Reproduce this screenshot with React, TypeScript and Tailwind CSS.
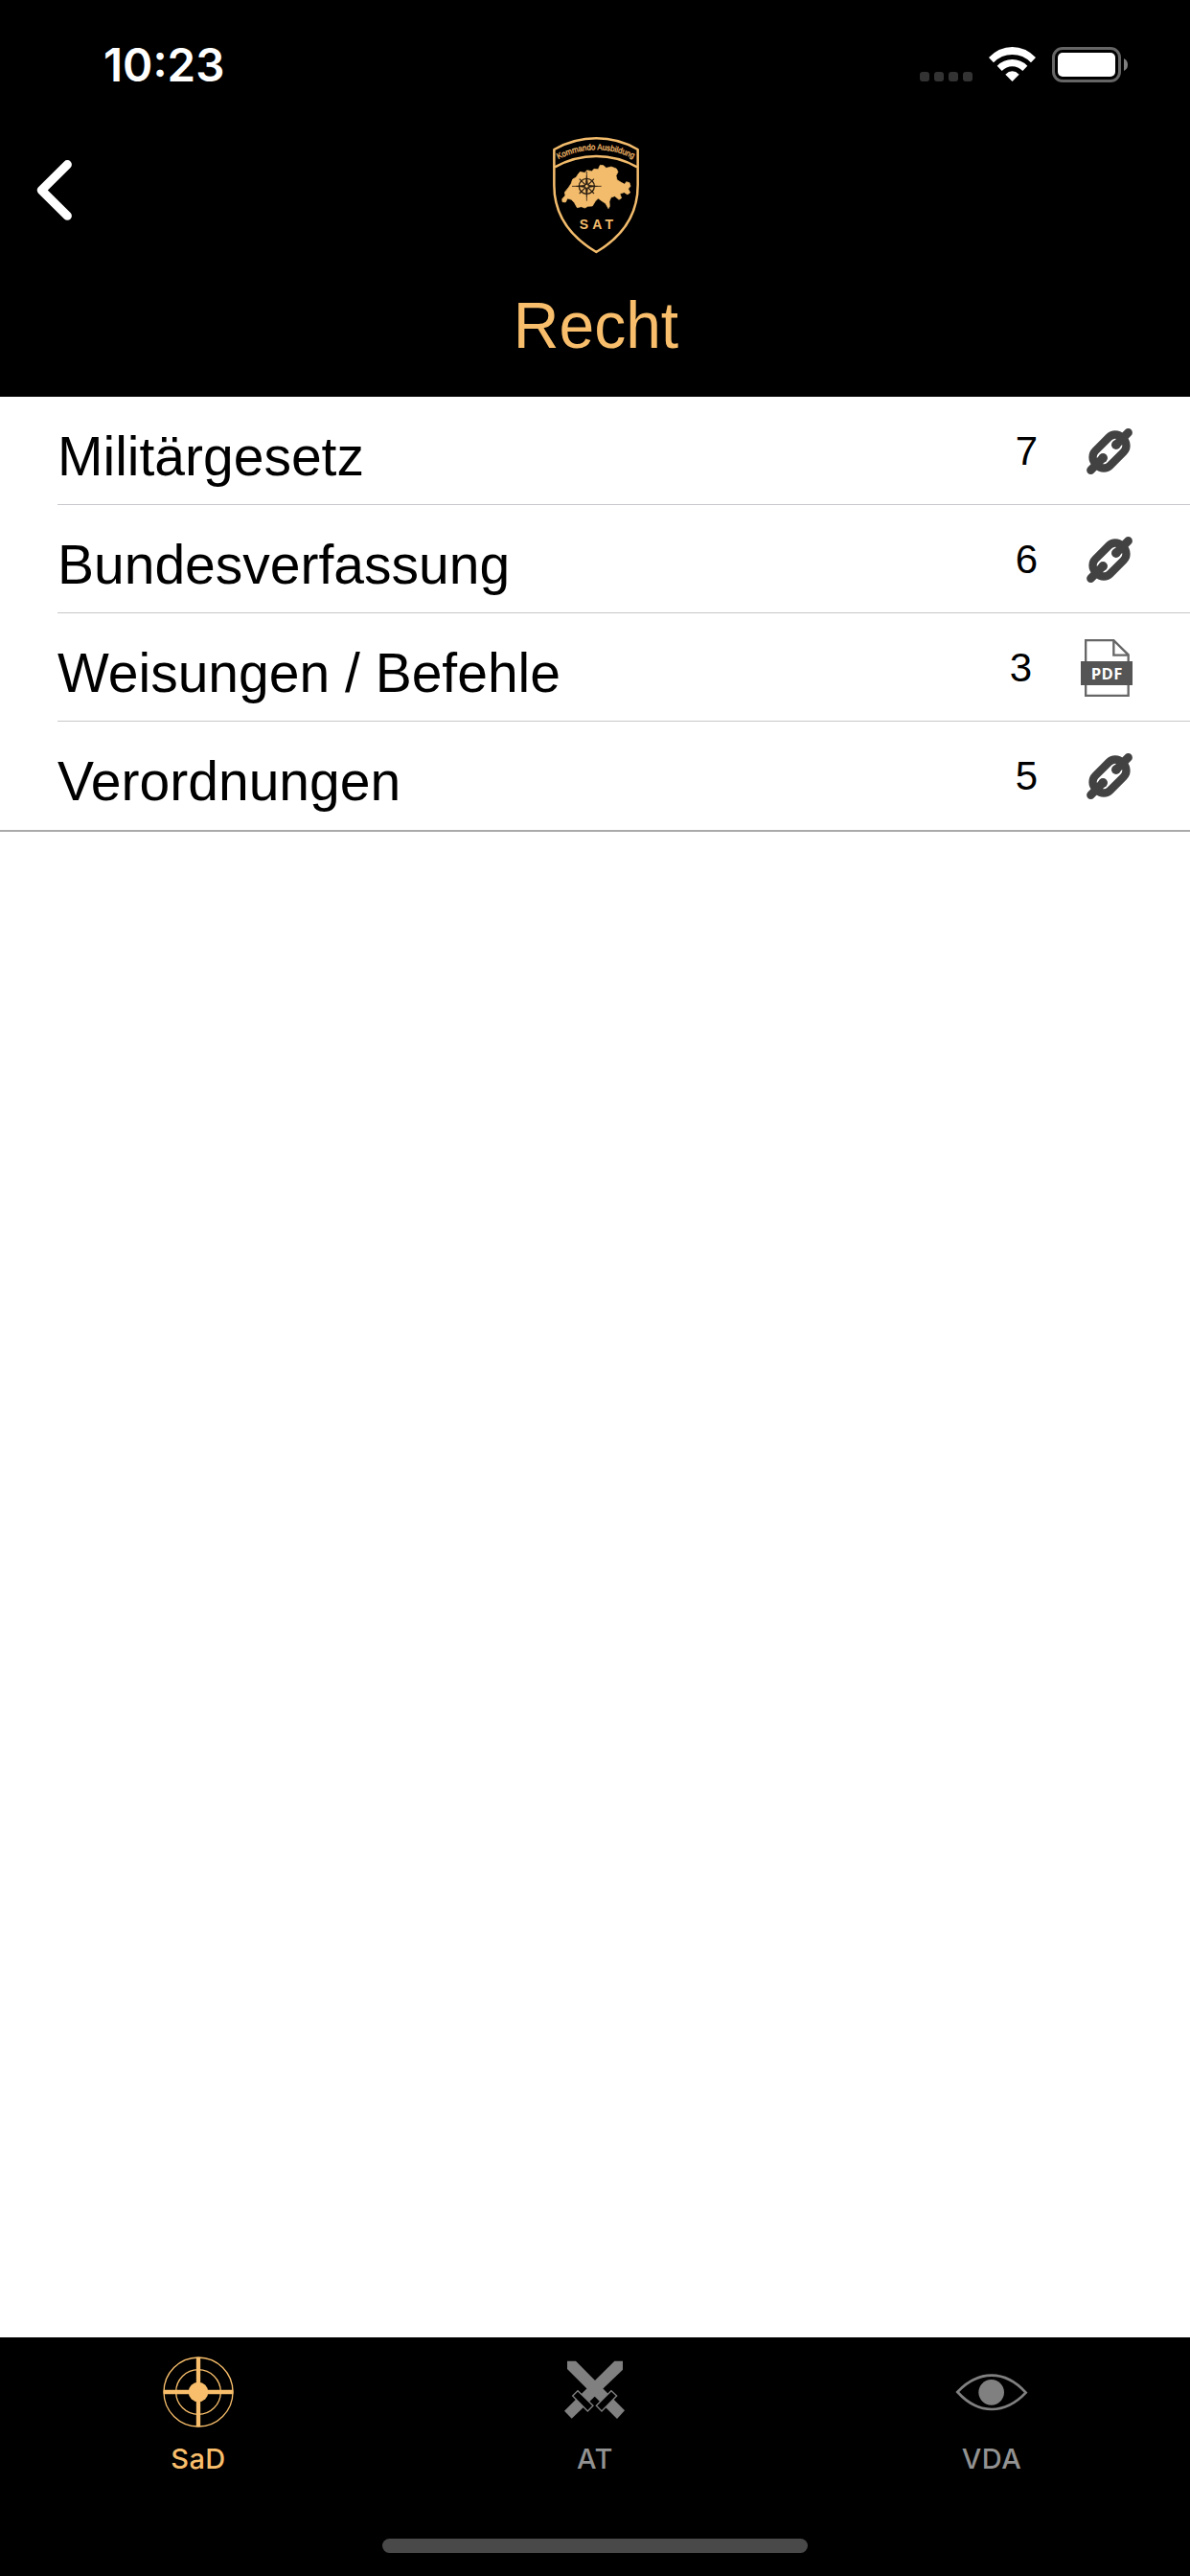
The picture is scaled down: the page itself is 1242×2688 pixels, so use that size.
import type { ReactNode } from "react";

type RowIcon = "link" | "pdf";

const rows: { title: string; count: number; icon: RowIcon }[] = [
  { title: "Militärgesetz", count: 7, icon: "link" },
  { title: "Bundesverfassung", count: 6, icon: "link" },
  { title: "Weisungen / Befehle", count: 3, icon: "pdf" },
  { title: "Verordnungen", count: 5, icon: "link" },
];

function LinkIcon() {
  return (
    <svg className="w-12 h-12" viewBox="-72 -72 144 144" fill="none" stroke="#424242">
      <g transform="rotate(-45)">
        <rect x="-58" y="-32.500" width="116" height="65" rx="28" strokeWidth="25" />
        <path d="M-83 0H-32M83 0H32" strokeWidth="26" strokeLinecap="round" />
        <circle cx="-29" cy="0" r="14.500" fill="#424242" stroke="none" />
        <circle cx="29" cy="0" r="14.500" fill="#424242" stroke="none" />
      </g>
    </svg>
  );
}

function PdfIcon() {
  return (
    <svg className="w-[54px] h-[60px]" viewBox="0 0 162 180">
      <path
        d="M15.500 3.500H103L149 49V176.500H15.500ZM103 3.500V50H149"
        fill="none"
        stroke="#666"
        strokeWidth="7"
      />
      <rect y="69" width="162" height="75" fill="#555" />
      <text
        x="32"
        y="125"
        fill="#fff"
        fontSize="50"
        fontWeight="700"
        textLength="98"
        className="font-['Open_Sans',sans-serif]"
      >
        PDF
      </text>
    </svg>
  );
}

function Logo() {
  return (
    <svg className="w-[120px] h-[145px]" viewBox="0 0 360 435" fill="none">
      <path
        d="M52 78Q114 43 184 43Q254 43 314 78V190C314 285 262 353 184 399C106 353 52 285 52 190Z"
        stroke="#f3bc6c"
        strokeWidth="7.500"
        strokeLinejoin="round"
      />
      <path d="M54 133Q116 99 184 99Q252 99 312 133" stroke="#f3bc6c" strokeWidth="8" />
      <path id="motto" d="M65 109Q122 79 184 79Q246 79 305 109" />
      <text
        fill="#f3bc6c"
        fontSize="26"
        className="font-['Liberation_Sans',Arial,sans-serif]"
        stroke="#f3bc6c"
        strokeWidth="0.9"
      >
        <textPath href="#motto" textLength="244" lengthAdjust="spacingAndGlyphs">
          Kommando Ausbildung
        </textPath>
      </text>
      <path
        d="M126 157L133 148L148 151L155 143L170 146L177 139L190 140L196 127L207 128L215 136L231 132L247 138L252 148L246 160L249 173L262 181L273 187L278 179L288 182L291 193L284 201L290 213L282 219L271 212L258 217L263 230L255 235L242 224L230 228L225 241L226 256L222 263L213 247L201 239L190 231L181 240L172 255L158 256L148 261L137 257L124 260L115 244L106 235L94 231L88 243L78 242L77 233L87 222L85 212L97 197L105 185L110 171L121 165Z"
        fill="#f3bc6c"
        stroke="#f3bc6c"
        strokeWidth="2"
        strokeLinejoin="round"
      />
      <g transform="translate(154 193)" stroke="#2a1e12">
        <circle r="24" strokeWidth="4" />
        <path d="M-46 0H46M0-46V46" strokeWidth="2.500" />
        <path d="M-23-23L23 23M-23 23L23-23" strokeWidth="3.500" />
        <path d="M0-34L4-6L0 0L-4-6ZM0 34L4 6L0 0L-4 6ZM-34 0L-6 4L0 0L-6-4ZM34 0L6 4L0 0L6-4Z" fill="#2a1e12" />
        <circle r="6" fill="#f3bc6c" strokeWidth="3" />
      </g>
      <text
        x="131"
        y="327"
        fill="#f3bc6c"
        fontSize="42"
        fontWeight="700"
        textLength="106"
        className="font-['Liberation_Sans',Arial,sans-serif]"
      >
        SAT
      </text>
    </svg>
  );
}

function StatusIcons() {
  return (
    <div className="flex items-end">
      <div className="flex gap-[5px] pb-px">
        <span className="size-2.5 rounded-[3px] bg-[#333]" />
        <span className="size-2.5 rounded-[3px] bg-[#333]" />
        <span className="size-2.5 rounded-[3px] bg-[#333]" />
        <span className="size-2.5 rounded-[3px] bg-[#333]" />
      </div>
      {/* Wifi */}
      <svg className="w-[49px] h-9 ml-[17px] mb-px" viewBox="0 0 147 108" fill="#fff">
        <path d="M0 33Q32 0 73.500 0Q115 0 147 33L132 49Q108 24 73.500 24Q39 24 15 49Z" />
        <path d="M26 59Q46 39 73.500 39Q101 39 121 59L106 75Q92 61 73.500 61Q55 61 41 75Z" />
        <path d="M52 86Q62 76 73.500 76Q85 76 95 86L73.500 108Z" />
      </svg>
      {/* Battery */}
      <div className="flex items-center ml-[17px]">
        <div className="w-[72px] h-[37px] rounded-[11px] border-[3px] border-[#666] p-[3px]">
          <div className="h-full rounded-[5px] bg-white" />
        </div>
        <svg className="w-1 h-[13px] ml-[3px]" viewBox="0 0 4 13">
          <path d="M0 0Q4 2 4 6.500T0 13Z" fill="#808080" />
        </svg>
      </div>
    </div>
  );
}

function Header() {
  return (
    <header className="h-[414px] bg-black text-white">
      <div className="flex justify-between pl-[108px] pr-[65px] pt-[49px] h-[143px]">
        <span className="font-['Inter',sans-serif] text-[47.5px] leading-[38px] font-semibold">10:23</span>
        <div>
          <StatusIcons />
        </div>
      </div>
      <div className="grid grid-cols-3 h-[132px]">
        <svg
          className="w-[50px] h-[70px] ml-[30px] mt-5"
          viewBox="30 163 50 70"
          fill="none"
          stroke="#fff"
          strokeWidth="9.200"
          strokeLinecap="round"
          strokeLinejoin="round"
        >
          <path d="M70.300 171.700L43.300 198.400L70.300 225.200" />
        </svg>
        <div className="flex justify-center -mt-[13px]">
          <Logo />
        </div>
      </div>
      <h1 className="pt-[26px] pl-0.5 text-center text-[66px] leading-[76px] text-[#f8be6b] scale-y-[1.04]">Recht</h1>
    </header>
  );
}

function Tab({ label, active, children }: { label: string; active?: boolean; children: ReactNode }) {
  return (
    <div className={active ? "flex flex-col items-center text-[#f8be6b]" : "flex flex-col items-center text-[#808080]"}>
      <svg className="size-20 mt-[17px]" viewBox="-120 -120 240 240" fill="none">
        {children}
      </svg>
      <span
        className={
          active
            ? "mt-2.5 font-['Inter',sans-serif] text-[29px] leading-[40px] font-medium tracking-[0.5px]"
            : "mt-2.5 font-['Inter',sans-serif] text-[29px] leading-[40px] font-medium tracking-[0.5px] text-[#929292]"
        }
      >
        {label}
      </span>
    </div>
  );
}

function TabBar() {
  return (
    <footer className="h-[249px] bg-black flex flex-col justify-between items-center">
      <div className="grid grid-cols-3 w-full">
        <Tab label="SaD" active>
          <g stroke="currentColor">
            <circle r="108" strokeWidth="4" />
            <circle r="70" strokeWidth="4" />
            <path d="M0-109V109M-109 0H109" strokeWidth="13" />
          </g>
          <circle r="31" fill="currentColor" />
        </Tab>
        <Tab label="AT">
          <g fill="currentColor">
            <path d="M-87-97H-60L69 34L93 58L69 84L-87-72Z" />
            <path d="M87-97H61L-72 35L-96 59L-73 83L87-70Z" />
          </g>
          <g fill="#000" stroke="currentColor" strokeWidth="4">
            <path d="M-54-4L-70 12L-23 60L-6 43Z" />
            <path d="M51-4L68 12L21 60L4 43Z" />
          </g>
        </Tab>
        <Tab label="VDA">
          <path d="M-107 0Q-58-52 0-52T107 2Q58 54 0 54T-107 0Z" stroke="currentColor" strokeWidth="8" />
          <circle cx="-1" cy="1" r="40" fill="currentColor" />
        </Tab>
      </div>
      <div className="w-[444px] h-[15px] mb-6 rounded-full bg-[#494949]" />
    </footer>
  );
}

export default function App() {
  return (
    <div className="w-[1242px] h-[2688px] flex flex-col bg-white text-black font-['Liberation_Sans',Arial,sans-serif] overflow-hidden">
      <Header />
      <ul className="border-b-2 border-[#aaa]">
        {rows.map((row) => (
          <li key={row.title} className="group pl-[60px]">
            <div className="flex items-center h-[113px] pt-0.5 pr-[60px] border-b border-[#c8c7cc] group-last:border-transparent">
              <span className="flex-1 pt-2.5 text-[57px] leading-[64px]">{row.title}</span>
              <span className="mr-[51px] text-[42px] leading-[48px]">{row.count}</span>
              {row.icon === "link" ? <LinkIcon /> : <PdfIcon />}
            </div>
          </li>
        ))}
      </ul>
      <main className="flex-1" />
      <TabBar />
    </div>
  );
}
